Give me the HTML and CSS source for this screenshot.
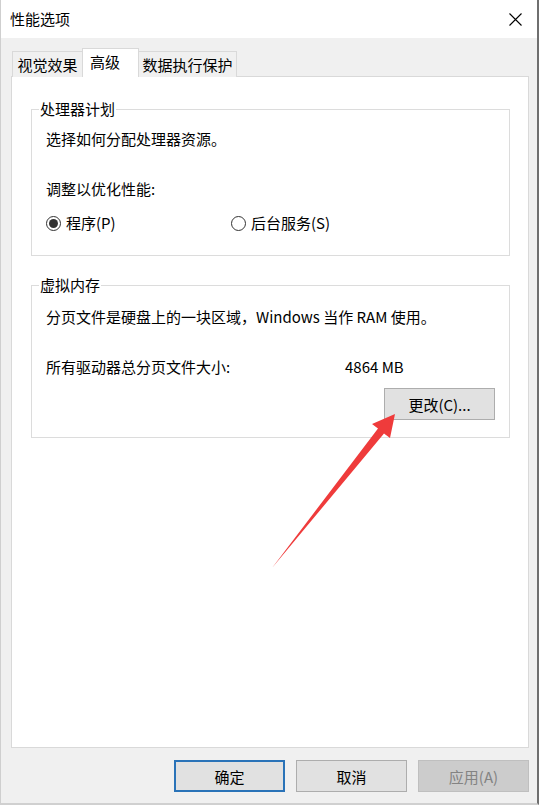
FILE: index.html
```html
<!DOCTYPE html>
<html lang="zh-CN">
<head>
  <meta charset="UTF-8">
  <meta name="viewport" content="width=device-width, initial-scale=1.0">
  <title>性能选项</title>
  <link rel="stylesheet" href="styles.css">
</head>
<body>
  <div class="window">
    <div class="titlebar">
      <span class="title">性能选项</span>
      <span class="close">
        <svg width="13" height="13" viewBox="0 0 13 13"><path d="M0.5 0.5 L12.5 12.5 M12.5 0.5 L0.5 12.5" stroke="#000" stroke-width="1.1" fill="none"/></svg>
      </span>
    </div>

    <div class="content">
      <div class="tabs">
        <div class="tab first">视觉效果</div>
        <div class="tab active">高级</div>
        <div class="tab last">数据执行保护</div>
      </div>

      <div class="panel">
        <fieldset class="group">
          <legend>处理器计划</legend>
          <p class="line first">选择如何分配处理器资源。</p>
          <p class="line gap">调整以优化性能:</p>
          <div class="radios">
            <label class="radio"><span class="dot checked"></span>程序(P)</label>
            <label class="radio"><span class="dot"></span>后台服务(S)</label>
          </div>
        </fieldset>

        <fieldset class="group memory">
          <legend>虚拟内存</legend>
          <p class="line first">分页文件是硬盘上的一块区域，Windows 当作 RAM 使用。</p>
          <div class="line gap size-row">
            <span>所有驱动器总分页文件大小:</span>
            <span>4864 MB</span>
          </div>
          <div class="change-row">
            <button class="btn">更改(C)...</button>
          </div>
        </fieldset>
      </div>

      <div class="actions">
        <button class="btn default">确定</button>
        <button class="btn">取消</button>
        <button class="btn" disabled>应用(A)</button>
      </div>
    </div>

    <svg class="arrow" width="539" height="805" viewBox="0 0 539 805">
      <polygon points="395,414 372,424 378,428.5 272,568 384,433.5 390,438" fill="#ef3b3b"/>
    </svg>
  </div>
</body>
</html>
```

FILE: styles.css
```css
* {
  box-sizing: border-box;
}

body {
  margin: 0;
  font-family: "Noto Sans CJK SC", "Noto Sans", sans-serif;
  font-size: 15px;
  line-height: 20px;
  color: #000;
  background: #f0f0f0;
}

.window {
  position: relative;
  width: 539px;
  height: 805px;
  background: #f0f0f0;
  border-left: 1px solid #cfcfcf;
  border-bottom: 2px solid #d0d0d0;
  border-right: 2px solid #6f6f6f;
}

.titlebar {
  height: 38px;
  background: #fff;
  display: flex;
  align-items: center;
  justify-content: space-between;
  padding: 0 15px 0 9px;
}

.close {
  display: flex;
}

.content {
  padding: 0 8px 0 10px;
}

.tabs {
  display: flex;
  align-items: flex-end;
  height: 38px;
  padding-left: 1px;
}

.tab {
  flex: none;
  white-space: nowrap;
  height: 26px;
  border: 1px solid #d9d9d9;
  border-bottom: none;
  background: #f0f0f0;
  display: flex;
  align-items: center;
  justify-content: center;
  margin-bottom: -1px;
}

.tab.first {
  width: 70px;
  border-right: none;
}

.tab.active {
  width: 57px;
  height: 29px;
  padding: 0 11px 3px 0;
  background: #fff;
  position: relative;
  z-index: 1;
}

.tab.last {
  width: 98px;
  border-left: none;
}

.panel {
  height: 672px;
  background: #fff;
  border: 1px solid #d9d9d9;
  padding: 22px 18px 0 19px;
}

.group {
  margin: 0;
  padding: 0 14px 22px 14px;
  border: 1px solid #dcdcdc;
  min-inline-size: 0;
}

.group legend {
  margin-left: -7px;
  padding: 0 1px;
}

.group.memory {
  margin-top: 19px;
  padding-bottom: 17px;
}

.line {
  margin: 0;
}

.line.first {
  margin-top: 10px;
}

.memory .line.first {
  margin-top: 12px;
}

.line.gap {
  margin-top: 30px;
}

.radios {
  display: grid;
  grid-template-columns: 185px auto;
  margin-top: 14px;
}

.radio {
  display: flex;
  align-items: center;
  gap: 5px;
}

.dot {
  width: 15px;
  height: 15px;
  border: 1px solid #333;
  border-radius: 50%;
  background: #fff;
  display: flex;
  align-items: center;
  justify-content: center;
}

.dot.checked::after {
  content: "";
  width: 9px;
  height: 9px;
  border-radius: 50%;
  background: #333;
}

.size-row {
  display: grid;
  grid-template-columns: 299px auto;
}

.change-row {
  display: flex;
  justify-content: flex-end;
  margin-top: 11px;
}

.btn {
  width: 111px;
  height: 32px;
  font-family: inherit;
  font-size: 15px;
  color: #000;
  background: #e1e1e1;
  border: 1px solid #adadad;
  padding: 0;
}

.btn.default {
  border: 2px solid #2a73b8;
}

.btn:disabled {
  background: #cccccc;
  border-color: #bfbfbf;
  color: #838383;
}

.actions {
  display: flex;
  justify-content: flex-end;
  gap: 11px;
  margin-top: 12px;
}

.arrow {
  position: absolute;
  left: -1px;
  top: 0;
  pointer-events: none;
}
```
